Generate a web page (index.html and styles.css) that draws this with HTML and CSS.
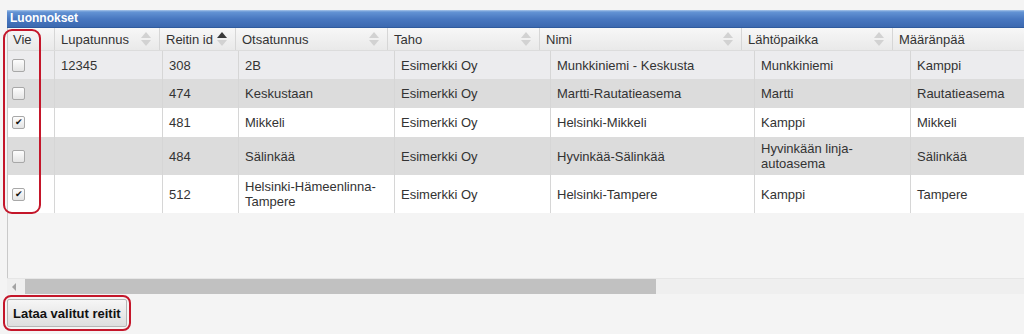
FILE: index.html
```html
<!DOCTYPE html>
<html lang="fi">
<head>
  <meta charset="UTF-8" />
  <title>Luonnokset</title>
  <link rel="stylesheet" href="styles.css">
</head>
<body>

  <div class="panel">
    <div class="panel-title">Luonnokset</div>

    <div class="grid">
      <div class="mark-vie"></div>

      <div class="head-row">
        <div class="th">Vie</div>
        <div class="th">Lupatunnus <span class="sort"><i class="up"></i><i class="down"></i></span></div>
        <div class="th">Reitin id <span class="sort"><i class="up on"></i><i class="down"></i></span></div>
        <div class="th">Otsatunnus <span class="sort"><i class="up"></i><i class="down"></i></span></div>
        <div class="th">Taho <span class="sort"><i class="up"></i><i class="down"></i></span></div>
        <div class="th">Nimi <span class="sort"><i class="up"></i><i class="down"></i></span></div>
        <div class="th">Lähtöpaikka <span class="sort"><i class="up"></i><i class="down"></i></span></div>
        <div class="th">Määränpää</div>
      </div>

      <div class="row hover">
        <div class="td"><span class="check"></span></div>
        <div class="td">12345</div>
        <div class="td">308</div>
        <div class="td">2B</div>
        <div class="td">Esimerkki Oy</div>
        <div class="td">Munkkiniemi - Keskusta</div>
        <div class="td">Munkkiniemi</div>
        <div class="td">Kamppi</div>
      </div>

      <div class="row alt">
        <div class="td"><span class="check"></span></div>
        <div class="td"></div>
        <div class="td">474</div>
        <div class="td">Keskustaan</div>
        <div class="td">Esimerkki Oy</div>
        <div class="td">Martti-Rautatieasema</div>
        <div class="td">Martti</div>
        <div class="td">Rautatieasema</div>
      </div>

      <div class="row">
        <div class="td"><span class="check checked">&#10004;</span></div>
        <div class="td"></div>
        <div class="td">481</div>
        <div class="td">Mikkeli</div>
        <div class="td">Esimerkki Oy</div>
        <div class="td">Helsinki-Mikkeli</div>
        <div class="td">Kamppi</div>
        <div class="td">Mikkeli</div>
      </div>

      <div class="row alt tall">
        <div class="td"><span class="check"></span></div>
        <div class="td"></div>
        <div class="td">484</div>
        <div class="td">Sälinkää</div>
        <div class="td">Esimerkki Oy</div>
        <div class="td">Hyvinkää-Sälinkää</div>
        <div class="td">Hyvinkään linja-autoasema</div>
        <div class="td">Sälinkää</div>
      </div>

      <div class="row tall">
        <div class="td"><span class="check checked">&#10004;</span></div>
        <div class="td"></div>
        <div class="td">512</div>
        <div class="td">Helsinki-Hämeenlinna-Tampere</div>
        <div class="td">Esimerkki Oy</div>
        <div class="td">Helsinki-Tampere</div>
        <div class="td">Kamppi</div>
        <div class="td">Tampere</div>
      </div>

      <div class="grid-empty"></div>
    </div>

    <div class="scrollbar">
      <span class="arrow-left"></span>
      <span class="thumb"></span>
    </div>

    <div class="actions">
      <div class="mark-btn">
        <button class="btn-load">Lataa valitut reitit</button>
      </div>
    </div>
  </div>

</body>
</html>
```

FILE: styles.css
```css
body {
  margin: 0;
  font-family: 'Liberation Sans', Arial, sans-serif;
  font-size: 13px;
  color: #333;
  background: #f4f4f4;
  overflow: hidden;
}

.panel {
  padding-top: 10px;
  padding-left: 7px;
  overflow: hidden;
}

.panel-title {
  height: 17px;
  line-height: 17px;
  padding-left: 3px;
  color: #fff;
  font-size: 12px;
  font-weight: bold;
  background: linear-gradient(#a9c6ea 0, #6393d4 2px, #4877c0 9px, #3c69b0 100%);
  border-bottom: 1px solid #2f5b9e;
}

.grid {
  position: relative;
  border-left: 1px solid #c9c9c9;
}

.head-row,
.row {
  display: grid;
}

.head-row {
  grid-template-columns: 47px 105px 76px 152px 152px 202px 151px 150px;
  height: 22px;
  background: linear-gradient(#f7f7f7, #e9e9e9);
  border-bottom: 1px solid #dcdcdc;
}

.row {
  grid-template-columns: 47px 108px 76px 156px 156px 204px 156px 150px;
  height: 29px;
  background: #fff;
}

.row.hover {
  height: 28px;
  background: #ececee;
}

.row.alt {
  background: #dcdcdc;
}

.row.tall {
  height: 38px;
}

.th,
.td {
  display: flex;
  align-items: center;
  border-right: 1px solid #d6d6d6;
  padding: 0 6px;
  min-width: 0;
}

.th {
  justify-content: space-between;
  padding-right: 8px;
  color: #333;
}

.th:first-child {
  padding-left: 5px;
}

.td {
  line-height: 15px;
}

.td:first-child {
  padding-left: 4px;
}

.sort {
  display: flex;
  flex-direction: column;
  gap: 2px;
}

.sort i {
  width: 0;
  height: 0;
  border-left: 5px solid transparent;
  border-right: 5px solid transparent;
}

.sort .up {
  border-bottom: 6px solid #d2d2d2;
}

.sort .down {
  border-top: 6px solid #d2d2d2;
}

.sort .up.on {
  border-bottom-color: #3a3a3a;
}

.check {
  width: 11px;
  height: 11px;
  border: 1px solid #a8a8a8;
  border-radius: 2px;
  background: linear-gradient(#fdfdfd, #e4e4e4);
  font-size: 9px;
  line-height: 11px;
  text-align: center;
  color: #111;
}

.grid-empty {
  height: 65px;
}

.mark-vie {
  position: absolute;
  left: -5px;
  top: 1px;
  width: 34px;
  height: 181px;
  border: 2.5px solid #c4162a;
  border-radius: 9px;
}

.scrollbar {
  display: flex;
  align-items: center;
  height: 15px;
  background: #efefef;
  border-top: 1px solid #e6e6e6;
}

.arrow-left {
  width: 0;
  height: 0;
  margin: 0 6px 0 5px;
  border-top: 4px solid transparent;
  border-bottom: 4px solid transparent;
  border-right: 4px solid #a3a3a3;
}

.thumb {
  width: 631px;
  height: 15px;
  margin-left: 3px;
  background: #c1c1c1;
}

.actions {
  padding: 1px 0 0 0;
  margin-left: -4px;
}

.mark-btn {
  display: inline-block;
  padding: 2px;
  border: 2.5px solid #c4162a;
  border-radius: 8px;
}

.btn-load {
  font-family: 'Liberation Sans', Arial, sans-serif;
  font-size: 13px;
  font-weight: bold;
  color: #111;
  height: 28px;
  padding: 0 5px;
  border: 1px solid #b5b5b5;
  border-radius: 2px;
  background: linear-gradient(#f6f6f6, #dedede);
}
```
